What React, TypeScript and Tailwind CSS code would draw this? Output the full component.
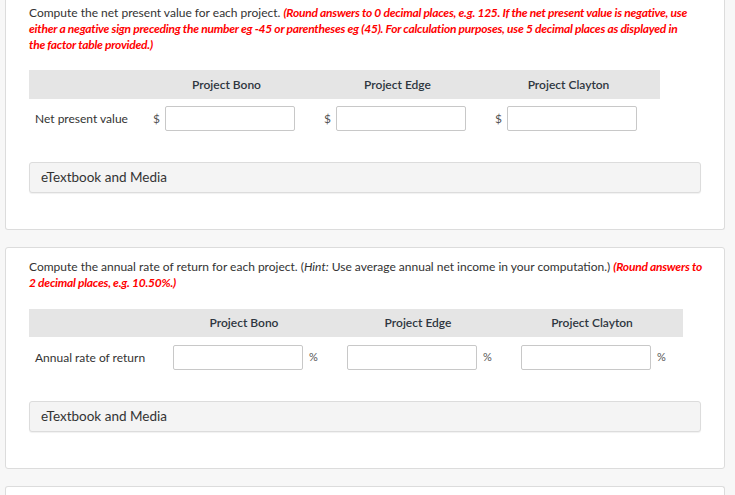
import React from "react"

const font = { fontFamily: "Lato, 'Noto Sans', sans-serif" }

function Media() {
  return (
    <div className="h-[31px] rounded-[3px] border border-[#dcdcdc] bg-[#f4f4f4] pl-[11px] text-[13.5px] leading-[29px] text-[#333] shadow-[0_1px_1px_rgba(0,0,0,0.06)]">
      eTextbook and Media
    </div>
  )
}

function Field() {
  return <div className="h-[25px] w-[130px] shrink-0 rounded-[2px] border border-[#c8c8c8] bg-white" />
}

function NpvTable() {
  return (
    <div>
      <div className="flex h-[29px] w-[631px] items-center bg-[#e5e5e5] text-[12px] font-semibold text-[#2e3640]">
        <div className="w-[112px] shrink-0" />
        <div className="w-[171px] shrink-0 text-center">Project Bono</div>
        <div className="w-[171px] shrink-0 text-center">Project Edge</div>
        <div className="w-[171px] shrink-0 text-center">Project Clayton</div>
      </div>
      <div className="mt-[7px] flex h-[25px] items-center text-[12px] text-[#333]">
        <div className="w-[118px] shrink-0 pl-[6px]">Net present value</div>
        {[0, 1, 2].map((i) => (
          <div key={i} className="flex w-[171px] shrink-0 items-center gap-[4px] pl-[6px]">
            <span className="w-[8px] text-[#555]">$</span>
            <Field />
          </div>
        ))}
      </div>
    </div>
  )
}

function RateTable() {
  return (
    <div>
      <div className="flex h-[28px] w-[654px] items-center bg-[#e5e5e5] text-[12px] font-semibold text-[#2e3640]">
        <div className="w-[128px] shrink-0" />
        <div className="w-[174px] shrink-0 text-center">Project Bono</div>
        <div className="w-[174px] shrink-0 text-center">Project Edge</div>
        <div className="w-[174px] shrink-0 text-center">Project Clayton</div>
      </div>
      <div className="mt-[8px] flex h-[25px] items-center text-[12px] text-[#333]">
        <div className="w-[144px] shrink-0 pl-[6px]">Annual rate of return</div>
        {[0, 1, 2].map((i) => (
          <div key={i} className="flex w-[174px] shrink-0 items-center gap-[6px]">
            <Field />
            <span className="text-[11px] text-[#555]">%</span>
          </div>
        ))}
      </div>
    </div>
  )
}

export default function App() {
  return (
    <div className="h-[495px] overflow-hidden bg-[#f7f7f7] pl-[5px] pr-[10px]" style={font}>
      <div className="rounded-b-[3px] border border-t-0 border-[#dcdcdc] bg-white px-[23px] pt-[5px] pb-[36px]">
        <p className="mr-[-12px] text-[12px] leading-4 text-[#333]">
          Compute the net present value for each project.{" "}
          <span className="font-bold italic tracking-[-0.25px] text-[#f00]">
            (Round answers to 0 decimal places, e.g. 125. If the net present value is negative, use
            <br />
            either a negative sign preceding the number eg -45 or parentheses eg (45). For calculation purposes, use 5 decimal
            places as displayed in
            <br />
            the factor table provided.)
          </span>
        </p>
        <div className="mt-[17px]">
          <NpvTable />
        </div>
        <div className="mt-[31px]">
          <Media />
        </div>
      </div>

      <div className="mt-[17px] rounded-[3px] border border-[#dcdcdc] bg-white px-[23px] pt-[11px] pb-[36px]">
        <p className="mr-[-12px] text-[12px] leading-4 text-[#333]">
          Compute the annual rate of return for each project. (<i>Hint:</i> Use average annual net income in your
          computation.){" "}
          <span className="font-bold italic tracking-[-0.25px] text-[#f00]">
            (Round answers to
            <br />2 decimal places, e.g. 10.50%.)
          </span>
        </p>
        <div className="mt-[18px]">
          <RateTable />
        </div>
        <div className="mt-[31px]">
          <Media />
        </div>
      </div>

      <div className="mt-[17px] h-[40px] rounded-t-[3px] border border-b-0 border-[#dcdcdc] bg-white" />
    </div>
  )
}
